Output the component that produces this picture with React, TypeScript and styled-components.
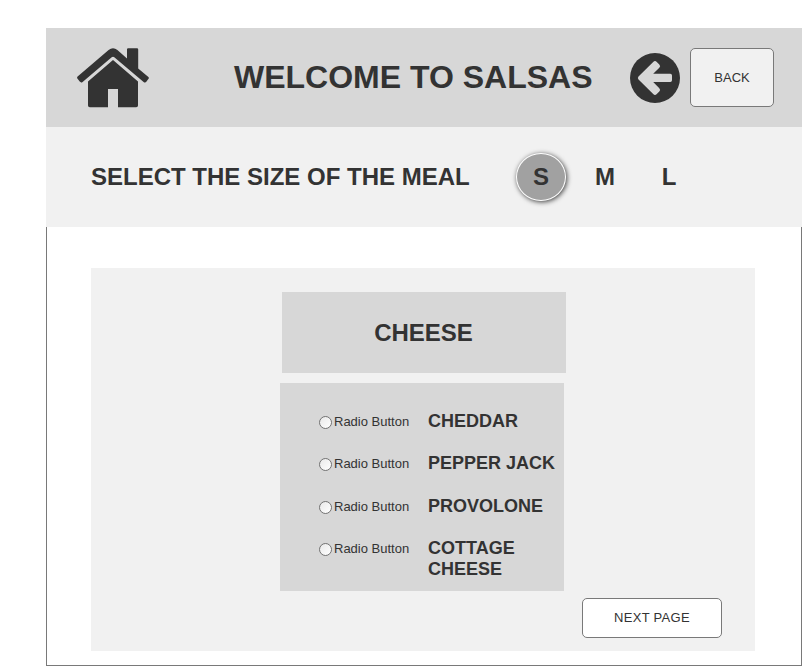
import React, { useState } from "react";
import styled, { createGlobalStyle } from "styled-components";

const GlobalStyle = createGlobalStyle`
  *, *::before, *::after { box-sizing: border-box; }
  body {
    margin: 0;
    background: #fff;
    color: #333;
    font-family: "Liberation Sans", Arial, sans-serif;
  }
`;

const Page = styled.div`
  display: flex;
  flex-direction: column;
  width: 802px;
  height: 666px;
  padding: 28px 0 0 46px;
  overflow: hidden;
`;

const Header = styled.header`
  display: flex;
  align-items: flex-start;
  height: 99px;
  flex: none;
  padding-left: 31px;
  background: #d7d7d7;
`;

const HomeIcon = styled.svg`
  width: 72px;
  height: 60px;
  margin-top: 20px;
  flex: none;
`;

const Title = styled.h1`
  width: 396px;
  margin: 31px 0 0 85px;
  font-size: 32px;
  line-height: 37px;
  white-space: nowrap;
`;

const ArrowIcon = styled.svg`
  width: 50px;
  height: 50px;
  margin-top: 25px;
  flex: none;
`;

const Button = styled.button<{ $width: number; $height: number; $fill: string }>`
  width: ${(p) => p.$width}px;
  height: ${(p) => p.$height}px;
  flex: none;
  padding: 0;
  border: 1px solid #797979;
  border-radius: 5px;
  background: ${(p) => p.$fill};
  color: #333;
  font: 13px/15px "Liberation Sans", Arial, sans-serif;
`;

const BackButton = styled(Button)`
  margin: 20px 0 0 10px;
`;

const SizeBar = styled.section`
  display: flex;
  align-items: center;
  height: 100px;
  flex: none;
  padding-left: 45px;
  background: #f1f1f1;
`;

const SizeTitle = styled.h2`
  width: 425px;
  margin: 0;
  font-size: 24px;
  line-height: 28px;
  white-space: nowrap;
`;

const SizeList = styled.div`
  display: flex;
  align-items: center;
  gap: 14px;
`;

const SizeOption = styled.button<{ $selected: boolean }>`
  width: 50px;
  height: 48px;
  padding: 0;
  border: 1px solid ${(p) => (p.$selected ? "#fff" : "transparent")};
  border-radius: 50%;
  background: ${(p) => (p.$selected ? "#a1a1a1" : "transparent")};
  box-shadow: ${(p) => (p.$selected ? "1px 1px 5px rgba(0, 0, 0, 0.75)" : "none")};
  color: #333;
  font: bold 24px/28px "Liberation Sans", Arial, sans-serif;
`;

const Body = styled.main`
  flex: 1;
  padding: 41px 46px 14px 44px;
  border: 1px solid #797979;
  border-top: 0;
`;

const Panel = styled.section`
  display: flex;
  flex-direction: column;
  height: 383px;
  padding: 24px 0 0 189px;
  background: #f1f1f1;
`;

const Category = styled.h2`
  display: flex;
  align-items: center;
  justify-content: center;
  width: 284px;
  height: 81px;
  margin: 0 0 10px 2px;
  padding-right: 1px;
  background: #d7d7d7;
  font-size: 24px;
  line-height: 28px;
`;

const OptionList = styled.div`
  display: grid;
  grid-template-rows: 42px 43px 42px 42px;
  width: 284px;
  height: 208px;
  padding: 27px 0 0 39px;
  background: #d7d7d7;
`;

const Option = styled.label`
  display: grid;
  grid-template-columns: 15px 94px 1fr;
  align-items: start;
`;

const Radio = styled.input`
  appearance: none;
  width: 13px;
  height: 13px;
  margin: 6px 0 0;
  border: 1px solid #737373;
  border-radius: 50%;
  background: linear-gradient(135deg, #e9e9e9, #fff);

  &:checked {
    background: radial-gradient(circle, #333 0 3px, #f5f5f5 3.5px);
  }
`;

const RadioLabel = styled.span`
  padding-top: 4px;
  font-size: 13px;
  line-height: 15px;
  white-space: nowrap;
`;

const OptionName = styled.span`
  padding-top: 1px;
  font-size: 18px;
  font-weight: bold;
  line-height: 21px;
`;

const NextButton = styled(Button)`
  margin: 7px 0 0 302px;
  padding-bottom: 1px;
  letter-spacing: 0.3px;
`;

const sizes = ["S", "M", "L"];
const cheeses = ["CHEDDAR", "PEPPER JACK", "PROVOLONE", "COTTAGE CHEESE"];

export default function App() {
  const [size, setSize] = useState("S");

  return (
    <>
      <GlobalStyle />
      <Page>
        <Header>
          <HomeIcon viewBox="0 0 72 60" fill="#333" role="img" aria-label="Home">
            <path d="M.6 28.6 31.6 2Q36-1.6 40.4 2L50 10.4V1.4Q50 .3 51.1.3H60Q61.2.3 61.2 1.5V20.4L71.4 29Q72.3 29.8 71.5 30.7L69.5 33.4Q68.3 35.2 66.6 33.9L37.3 9.3Q36 8.2 34.7 9.3L5.6 33.9Q4 35.1 2.7 33.6L.4 30.6Q-.3 29.5.6 28.6Z" />
            <path d="M36 12 61 33.6V57.4Q61 59.2 59.2 59.2H41V41H31V59.2H12.8Q11 59.2 11 57.4V33.6Z" />
          </HomeIcon>
          <Title>WELCOME TO SALSAS</Title>
          <ArrowIcon viewBox="0 0 50 50" role="img" aria-label="Previous">
            <circle cx="25" cy="25" r="25" fill="#333" />
            <path
              d="M8.5 23.6 23.2 8.9Q25 7.2 26.8 8.9L29.3 11.4Q31 13.1 29.3 14.8L23.2 20.8H40.3Q42 20.8 42 22.5V27.3Q42 29 40.3 29H23.2L29.3 35.2Q31 36.9 29.3 38.6L26.8 41.1Q25 42.8 23.2 41.1L8.5 26.4Q7.2 25 8.5 23.6Z"
              fill="#d7d7d7"
            />
          </ArrowIcon>
          <BackButton $width={84} $height={59} $fill="#f1f1f1">BACK</BackButton>
        </Header>
        <SizeBar>
          <SizeTitle>SELECT THE SIZE OF THE MEAL</SizeTitle>
          <SizeList>
            {sizes.map((s) => (
              <SizeOption key={s} $selected={s === size} onClick={() => setSize(s)}>
                {s}
              </SizeOption>
            ))}
          </SizeList>
        </SizeBar>
        <Body>
          <Panel>
            <Category>CHEESE</Category>
            <OptionList>
              {cheeses.map((name) => (
                <Option key={name}>
                  <Radio type="radio" name="cheese" />
                  <RadioLabel>Radio Button</RadioLabel>
                  <OptionName>{name}</OptionName>
                </Option>
              ))}
            </OptionList>
            <NextButton $width={140} $height={40} $fill="#fff">NEXT PAGE</NextButton>
          </Panel>
        </Body>
      </Page>
    </>
  );
}
